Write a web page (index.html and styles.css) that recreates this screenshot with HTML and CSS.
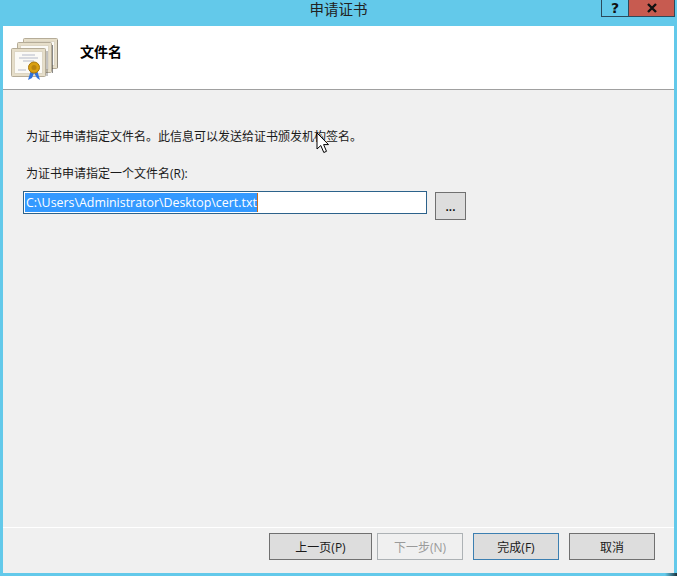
FILE: index.html
```html
<!DOCTYPE html>
<html lang="zh">
<head>
<meta charset="utf-8">
<title>申请证书</title>
<link rel="stylesheet" href="styles.css">
</head>
<body>
<div class="window">
  <div class="titlebar">
    <div class="title">申请证书</div>
    <div class="controls">
      <div class="ctl help">?</div>
      <div class="ctl close"><svg width="12" height="10" viewBox="0 0 12 10"><path d="M2 1 L10 9 M10 1 L2 9" stroke="#111" stroke-width="2.4" fill="none"/></svg></div>
    </div>
  </div>
  <div class="client">
    <header class="header">
      <svg class="cert-icon" width="50" height="46" viewBox="0 0 50 46">
        <g stroke="#b5ac98" stroke-width="1" fill="#e6dec9">
          <rect x="15.500" y="1.500" width="34" height="30" rx="1"/>
          <rect x="18.500" y="4.500" width="28" height="24" fill="#fbfaf6" stroke="#ddd6c4"/>
          <rect x="9.500" y="5.500" width="34" height="30" rx="1"/>
          <rect x="12.500" y="8.500" width="28" height="24" fill="#fbfaf6" stroke="#ddd6c4"/>
          <rect x="3.500" y="11.500" width="34" height="28" rx="1"/>
          <rect x="6.500" y="14.500" width="28" height="22" fill="#fbfaf6" stroke="#ddd6c4"/>
        </g>
        <path d="M50 3 V31 M44.500 8 V36 M39 14 V39" stroke="#3c3c3c" stroke-width="1" fill="none" opacity=".6"/>
        <path d="M14 18 H27 M11 21 H30 M15 24 H26 M10 33 H18" stroke="#b4b9c8" stroke-width="1" fill="none"/>
        <path d="M23 33 L20 43 L24 41 L26 36 Z" fill="#2f72dc"/>
        <path d="M26 36 L29 41 L32 43 L29 33 Z" fill="#2f72dc"/>
        <circle cx="26" cy="30.500" r="5.500" fill="#d9a012" stroke="#a8760a"/>
        <circle cx="26" cy="30.500" r="2.500" fill="#b98410"/>
      </svg>
      <h1 class="page-title">文件名</h1>
    </header>
    <main class="body">
      <p class="desc">为证书申请指定文件名。此信息可以发送给证书颁发机构签名。</p>
      <label class="field-label" for="file">为证书申请指定一个文件名(R):</label>
      <div class="file-row">
        <div class="input" id="file"><span class="selected">C:\Users\Administrator\Desktop\cert.txt</span></div>
        <button class="btn browse">...</button>
      </div>
    </main>
    <footer class="footer">
      <button class="btn prev">上一页(P)</button>
      <button class="btn next" disabled>下一步(N)</button>
      <button class="btn finish">完成(F)</button>
      <button class="btn cancel">取消</button>
    </footer>
  </div>
  <div class="corner-shadow"></div>
  <svg class="cursor" width="16" height="24" viewBox="0 0 16 24"><path d="M1 1 V17 L4.800 13.500 L7.800 20.500 L10.500 19.300 L7.600 12.600 H12.500 Z" fill="#fff" stroke="#000" stroke-width="1"/></svg>
</div>
</body>
</html>
```
FILE: styles.css
```css
* { box-sizing: border-box; }
html, body { margin: 0; padding: 0; }
body { width: 677px; height: 576px; overflow: hidden; background: #63c9ea; font-family: "Open Sans", "Noto Sans CJK SC", sans-serif; font-size: 12px; color: #1a1a1a; }
.window { position: relative; width: 677px; height: 576px; padding: 0 3px 3px; display: flex; flex-direction: column; background: #63c9ea; }
.titlebar { height: 26px; flex: none; display: flex; position: relative; justify-content: center; }
.title { font-size: 14.500px; line-height: 20px; color: #222; }
.controls { position: absolute; top: 0; right: -1px; display: flex; height: 17px; border: 1px solid #2b4a5c; border-top: none; }
.ctl { display: flex; align-items: center; justify-content: center; height: 16px; }
.help { width: 27px; border-right: 1px solid #2b4a5c; font: bold 14px/16px "DejaVu Sans", sans-serif; color: #111; }
.close { width: 45px; background: #c75b50; }
.client { flex: 1; display: flex; flex-direction: column; background: #f0f0f0; }
.header { height: 64px; flex: none; display: flex; align-items: flex-start; background: #fff; border-bottom: 1px solid #a0a0a0; }
.cert-icon { margin: 11px 0 0 5px; flex: none; }
.page-title { margin: 16px 0 0 22px; font-size: 14px; line-height: 20px; font-weight: bold; color: #000; }
.body { flex: 1; padding: 38px 0 0 20px; }
.desc { margin: 0; padding-left: 3px; line-height: 17px; }
.field-label { display: block; margin: 20px 0 0; padding-left: 3px; line-height: 17px; }
.file-row { display: flex; align-items: flex-start; margin-top: 9px; }
.input { width: 404px; height: 23px; background: #fff; border: 1px solid #2c628b; padding: 1px 0 0 1px; line-height: 19px; font-size: 12.400px; }
.selected { display: inline-block; height: 19px; background: #3399ff; color: #fff; padding-left: 1px; border-right: 1px solid #c86a1e; }
.btn { font-family: inherit; font-size: 12px; color: #1a1a1a; background: #dddddd; border: 1px solid #707070; padding: 0; }
.browse { width: 31px; height: 28px; margin: 1px 0 0 8px; color: #000; font-weight: 600; }
.footer { height: 46px; flex: none; display: flex; align-items: flex-start; border-top: 1px solid #fff; padding: 5px 19px 0 266px; }
.footer .btn { height: 27px; }
.prev { width: 103px; }
.next { width: 86px; margin-left: 5px; }
.finish { width: 86px; margin-left: 10px; border-color: #3c7fb1 !important; }
.cancel { width: 86px; margin-left: 10px; }
.next:disabled { background: #f0f0f0; border-color: #adb2b5; color: #9a9a9a; }
.corner-shadow { position: absolute; right: 0; bottom: 0; width: 12px; height: 3px; background: linear-gradient(to right, rgba(20, 40, 50, 0), rgba(20, 40, 50, 0.95)); }
.cursor { position: absolute; left: 316px; top: 132px; }
```
